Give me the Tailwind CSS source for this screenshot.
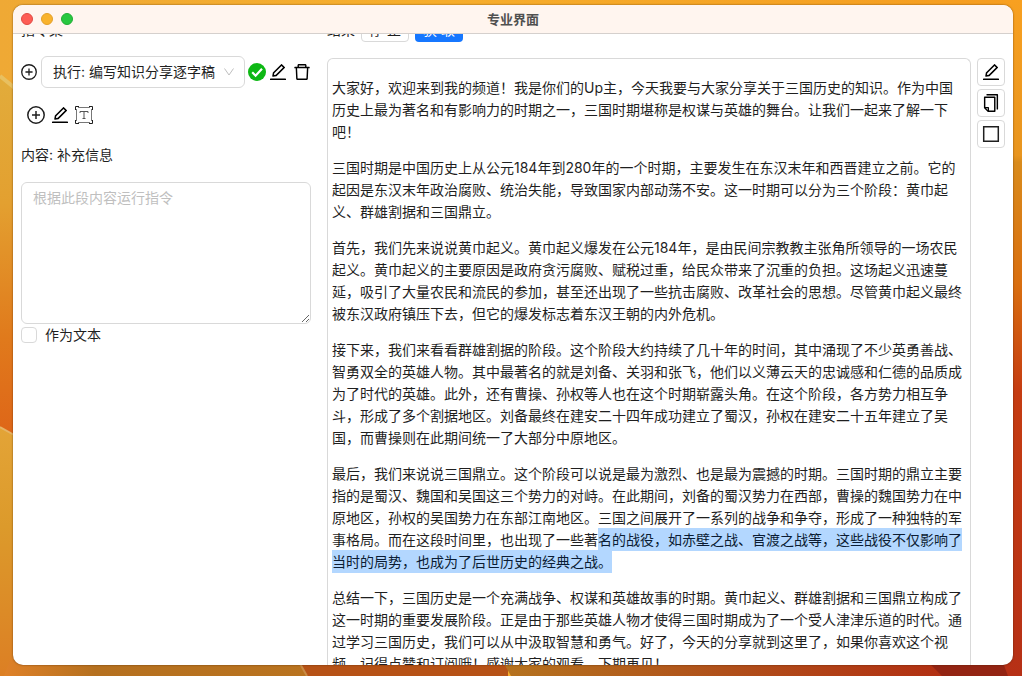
<!DOCTYPE html>
<html lang="zh-CN">
<head>
<meta charset="utf-8">
<title>专业界面</title>
<script src="https://cdn.jsdelivr.net/npm/@tailwindcss/browser@4"></script>
</head>
<body class="relative h-screen overflow-hidden font-['Inter','Noto_Sans_CJK_SC',sans-serif] text-sm leading-[22px] text-[#1f1f1f]">

<!-- icon definitions -->
<svg class="hidden" aria-hidden="true">
  <symbol id="edit" viewBox="64 64 896 896"><path d="M257.7 752c2 0 4-.2 6-.5L431.9 722c2-.4 3.9-1.3 5.3-2.8l423.9-423.9a9.96 9.96 0 000-14.1L694.9 114.9c-1.9-1.9-4.4-2.9-7.1-2.9s-5.2 1-7.1 2.9L256.8 538.8c-1.5 1.5-2.4 3.3-2.8 5.3l-29.5 168.2a33.5 33.5 0 009.4 29.8c6.6 6.4 14.9 9.9 23.8 9.9zm67.4-174.4L687.8 215l73.3 73.3-362.7 362.6-88.9 15.7 15.6-89zM880 836H144c-17.7 0-32 14.3-32 32v36c0 4.4 3.6 8 8 8h784c4.4 0 8-3.6 8-8v-36c0-17.7-14.3-32-32-32z"/></symbol>
  <symbol id="trash" viewBox="64 64 896 896"><path d="M360 184h-8c4.4 0 8-3.6 8-8v8h304v-8c0 4.400 3.600 8 8 8h-8v72h72v-80c0-35.300-28.700-64-64-64H352c-35.300 0-64 28.700-64 64v80h72v-72zm504 72H160c-17.700 0-32 14.300-32 32v32c0 4.400 3.600 8 8 8h60.400l24.700 523c1.600 34.100 29.800 61 63.900 61h454c34.200 0 62.300-26.800 63.900-61l24.700-523H888c4.400 0 8-3.600 8-8v-32c0-17.700-14.300-32-32-32zM731.300 840H292.700l-24.200-512h487l-24.200 512z"/></symbol>
  <symbol id="copy" viewBox="64 64 896 896"><path d="M832 64H296c-4.400 0-8 3.600-8 8v56c0 4.400 3.600 8 8 8h496v688c0 4.400 3.600 8 8 8h56c4.400 0 8-3.600 8-8V96c0-17.700-14.300-32-32-32zM704 192H192c-17.700 0-32 14.300-32 32v530.700c0 8.500 3.400 16.600 9.400 22.600l173.300 173.300c2.200 2.200 4.700 4 7.400 5.500v1.900h4.200c3.500 1.300 7.200 2 11 2H704c17.700 0 32-14.300 32-32V224c0-17.700-14.300-32-32-32zM350 856.200L263.900 770H350v86.200zM664 888H414V746c0-22.100-17.900-40-40-40H232V264h432v624z"/></symbol>
  <symbol id="plus" viewBox="0 0 18 18"><g fill="none" stroke="currentColor" stroke-width="1.5"><circle cx="9" cy="9" r="8.200"/><path d="M9 5v8M5 9h8"/></g></symbol>
</svg>

<!-- desktop wallpaper -->
<svg class="absolute inset-0 -z-10 h-full w-full" viewBox="0 0 1022 676" preserveAspectRatio="none" aria-hidden="true">
  <defs>
    <linearGradient id="top"><stop stop-color="#efa935"/><stop offset=".4" stop-color="#f6ae2d"/><stop offset="1" stop-color="#f59c1f"/></linearGradient>
    <linearGradient id="left" x2="0" y2="1"><stop stop-color="#e2ac3b"/><stop offset=".35" stop-color="#e3a030"/><stop offset=".72" stop-color="#e07a1c"/><stop offset="1" stop-color="#de6518"/></linearGradient>
    <linearGradient id="left2" x2="0" y2="1"><stop stop-color="#e3a437"/><stop offset=".4" stop-color="#dc9a2b"/><stop offset="1" stop-color="#dc7f24"/></linearGradient>
    <linearGradient id="right" x2="0" y2="1"><stop stop-color="#f8a020"/><stop offset=".23" stop-color="#e8951f"/><stop offset=".24" stop-color="#d98b1c"/><stop offset=".42" stop-color="#d96f10"/><stop offset=".58" stop-color="#c53c12"/><stop offset="1" stop-color="#b63016"/></linearGradient>
    <linearGradient id="b1"><stop stop-color="#df8128"/><stop offset=".3" stop-color="#b5701f"/><stop offset="1" stop-color="#b9731f"/></linearGradient>
    <linearGradient id="b2"><stop stop-color="#b5731f"/><stop offset=".5" stop-color="#b0501a"/><stop offset="1" stop-color="#b22f12"/></linearGradient>
  </defs>
  <rect width="1022" height="676" fill="url(#top)"/>
  <path d="M0 76l16 13v350L0 427z" fill="url(#left)"/>
  <path d="M0 76l16 13" stroke="#e8c060" stroke-width="4"/>
  <path d="M0 427l16 9v240H0z" fill="url(#left2)"/>
  <path d="M0 427l16 9" stroke="#e6b465" stroke-width="2"/>
  <path d="M1000 0h22v676h-22z" fill="url(#right)"/>
  <path d="M10 660h290l8 16H4z" fill="url(#b1)"/>
  <path d="M298 660h210v16H307z" fill="#b65216"/>
  <path d="M298 660l9 16" stroke="#c98a45" stroke-width="2"/>
  <path d="M502 660h430l12 16H511z" fill="url(#b2)"/>
  <path d="M926 660h76l6 16h-66z" fill="#932413"/>
</svg>

<div class="flex h-full flex-col pt-[5px] pr-[9px] pb-[11px] pl-[13px]">
  <div class="flex min-h-0 flex-1 flex-col overflow-hidden rounded-[10px] bg-white shadow-[0_0_2px_rgba(60,30,0,0.7)]">

    <header class="z-10 grid h-[29px] shrink-0 grid-cols-[1fr_auto_1fr] items-center border-b border-[#d5d0cd] bg-[#fff5ef] px-2">
      <div class="flex gap-2">
        <button aria-label="关闭" class="size-3 rounded-full border border-[#df4a43] bg-[#fe5d55]"></button>
        <button aria-label="最小化" class="size-3 rounded-full border border-[#e2a02a] bg-[#f9b32d]"></button>
        <button aria-label="缩放" class="size-3 rounded-full border border-[#22ac35] bg-[#28c840]"></button>
      </div>
      <h1 class="text-[13px] font-bold text-[#505050]">专业界面</h1>
    </header>

    <main class="-mt-4 flex min-h-0 flex-1 gap-4 pr-2 pl-2">

      <section class="w-[290px] shrink-0">
        <h2 class="flex h-6 items-center">指令集</h2>

        <div class="mt-[14px] flex h-8 items-center">
          <button aria-label="添加指令"><svg class="size-4"><use href="#plus"/></svg></button>
          <div class="relative ml-1 flex-1">
            <select aria-label="指令" class="h-8 w-full appearance-none rounded-md border border-[#d9d9d9] bg-white px-[11px] text-sm">
              <option>执行: 编写知识分享逐字稿</option>
            </select>
            <svg class="pointer-events-none absolute top-[11px] right-[11px] size-[10px]" viewBox="0 0 10 10" fill="none" stroke="#bfbfbf"><path d="M.5 1.500L5 8l4.500-6.500"/></svg>
          </div>
          <svg class="ml-[3px] size-[18px]" viewBox="0 0 18 18" role="img" aria-label="已启用"><circle cx="9" cy="9" r="9" fill="#0db814"/><path d="M4.200 9.200l3.400 3.500 6.400-6.900" fill="none" stroke="#fff" stroke-width="2.200"/></svg>
          <button aria-label="编辑指令" class="ml-[3px]"><svg class="size-[18px]"><use href="#edit"/></svg></button>
          <button aria-label="删除指令" class="ml-[6px]"><svg class="size-[18px]"><use href="#trash"/></svg></button>
        </div>

        <div class="mt-[18px] flex gap-[6px] pl-[6px]">
          <button aria-label="添加内容"><svg class="size-[18px]"><use href="#plus"/></svg></button>
          <button aria-label="编辑内容"><svg class="size-[18px]"><use href="#edit"/></svg></button>
          <button aria-label="文本内容"><svg class="size-[18px]" viewBox="0 0 18 18" fill="none" stroke="#1f1f1f">
            <path d="M3 1.500h12M3 16.500h12M1.500 3v12M16.500 3v12" stroke="#777"/>
            <path d="M.5 4V.5H4M14 .5h3.500V4M17.500 14v3.500H14M4 17.500H.5V14"/>
            <path d="M5 7V5.500h8V7M9 5.500v7M7.500 12.500h3" stroke="#555"/>
          </svg></button>
        </div>

        <label for="content" class="mt-[20px] block">内容: 补充信息</label>
        <textarea id="content" placeholder="根据此段内容运行指令" class="mt-4 block h-[142px] w-full rounded-md border border-[#d9d9d9] px-[11px] py-1 text-sm leading-[22px] placeholder:text-[#bfbfbf]"></textarea>
        <div class="flex items-center gap-2">
          <input id="as-text" type="checkbox" class="size-4 appearance-none rounded border border-[#d9d9d9] bg-white checked:bg-[#1677ff]">
          <label for="as-text">作为文本</label>
        </div>
      </section>

      <section class="flex min-w-0 flex-1 flex-col">
        <div class="flex h-6 shrink-0 items-center gap-[6px]">
          <h2 class="w-7">结果</h2>
          <button class="h-6 w-12 rounded border border-[#d9d9d9] bg-white whitespace-nowrap">停 止</button>
          <button class="h-6 w-12 rounded bg-[#1677ff] whitespace-nowrap text-white">获 取</button>
        </div>
        <div class="mt-4 flex min-h-0 flex-1 gap-[6px]">
          <article class="min-w-0 flex-1 space-y-[14px] overflow-hidden rounded-t-md border border-b-0 border-[#d9d9d9] px-1 pt-[18px] [text-spacing-trim:space-all]">
            <p>大家好，欢迎来到我的频道！我是你们的Up主，今天我要与大家分享关于三国历史的知识。作为中国历史上最为著名和有影响力的时期之一，三国时期堪称是权谋与英雄的舞台。让我们一起来了解一下吧！</p>
            <p>三国时期是中国历史上从公元184年到280年的一个时期，主要发生在东汉末年和西晋建立之前。它的起因是东汉末年政治腐败、统治失能，导致国家内部动荡不安。这一时期可以分为三个阶段：黄巾起义、群雄割据和三国鼎立。</p>
            <p>首先，我们先来说说黄巾起义。黄巾起义爆发在公元184年，是由民间宗教教主张角所领导的一场农民起义。黄巾起义的主要原因是政府贪污腐败、赋税过重，给民众带来了沉重的负担。这场起义迅速蔓延，吸引了大量农民和流民的参加，甚至还出现了一些抗击腐败、改革社会的思想。尽管黄巾起义最终被东汉政府镇压下去，但它的爆发标志着东汉王朝的内外危机。</p>
            <p>接下来，我们来看看群雄割据的阶段。这个阶段大约持续了几十年的时间，其中涌现了不少英勇善战、智勇双全的英雄人物。其中最著名的就是刘备、关羽和张飞，他们以义薄云天的忠诚感和仁德的品质成为了时代的英雄。此外，还有曹操、孙权等人也在这个时期崭露头角。在这个阶段，各方势力相互争斗，形成了多个割据地区。刘备最终在建安二十四年成功建立了蜀汉，孙权在建安二十五年建立了吴国，而曹操则在此期间统一了大部分中原地区。</p>
            <p>最后，我们来说说三国鼎立。这个阶段可以说是最为激烈、也是最为震撼的时期。三国时期的鼎立主要指的是蜀汉、魏国和吴国这三个势力的对峙。在此期间，刘备的蜀汉势力在西部，曹操的魏国势力在中原地区，孙权的吴国势力在东部江南地区。三国之间展开了一系列的战争和争夺，形成了一种独特的军事格局。而在这段时间里，也出现了一些著<mark class="bg-[#b3d7ff] py-[3px] text-[#0b1c33]">名的战役，如赤壁之战、官渡之战等，这些战役不仅影响了当时的局势，也成为了后世历史的经典之战。</mark></p>
            <p>总结一下，三国历史是一个充满战争、权谋和英雄故事的时期。黄巾起义、群雄割据和三国鼎立构成了这一时期的重要发展阶段。正是由于那些英雄人物才使得三国时期成为了一个受人津津乐道的时代。通过学习三国历史，我们可以从中汲取智慧和勇气。好了，今天的分享就到这里了，如果你喜欢这个视频，记得点赞和订阅哦！感谢大家的观看，下期再见！</p>
          </article>
          <aside class="flex w-7 flex-col gap-[3px]">
            <button aria-label="编辑结果" class="grid size-7 place-items-center rounded border border-[#d9d9d9]"><svg class="size-[18px]"><use href="#edit"/></svg></button>
            <button aria-label="复制结果" class="grid size-7 place-items-center rounded border border-[#d9d9d9]"><svg class="size-[18px]"><use href="#copy"/></svg></button>
            <button aria-label="边框" class="grid size-7 place-items-center rounded border border-[#d9d9d9]"><svg class="size-[18px]" viewBox="0 0 18 18" fill="none" stroke="#1f1f1f" stroke-width="1.500"><path d="M1.700 1.700h14.600v14.600H1.700z"/></svg></button>
          </aside>
        </div>
      </section>
    </main>
  </div>
</div>
</body>
</html>
